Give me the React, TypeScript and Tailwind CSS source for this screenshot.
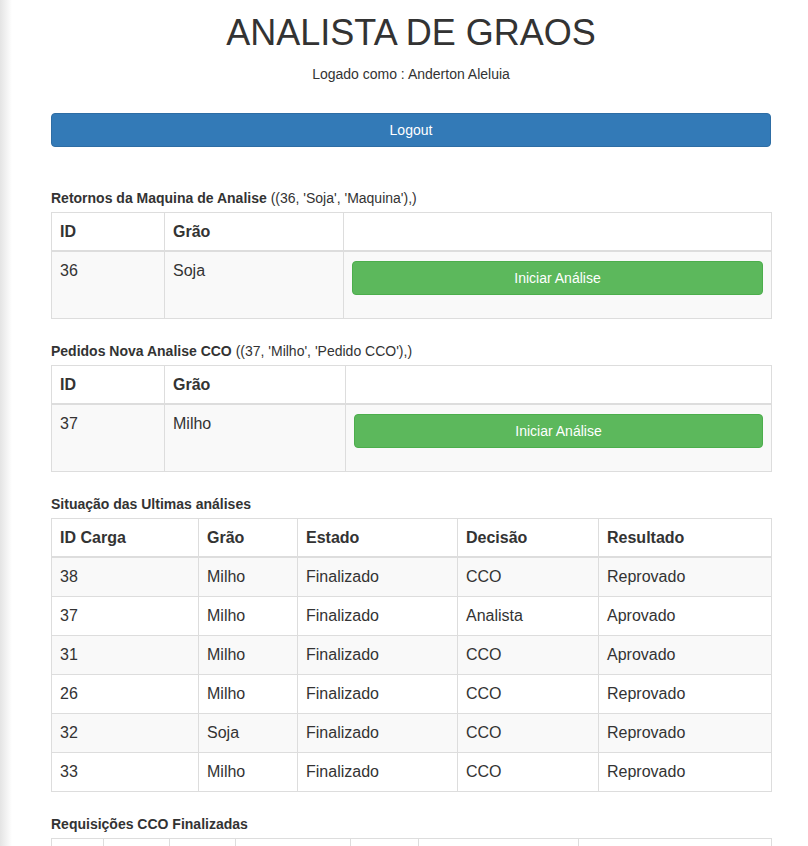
import React from "react";

const font = { fontFamily: '"Liberation Sans", Arial, Helvetica, sans-serif' };

function Label({ bold, rest }: { bold: string; rest?: string }) {
  return (
    <div className="mb-[4px] h-[20px] text-[14px] leading-[20px] text-[#333]">
      <span className="font-bold">{bold}</span>
      {rest ? <span> {rest}</span> : null}
    </div>
  );
}

function GreenButton() {
  return (
    <button className="mt-[1px] mb-[15px] block h-[34px] w-full rounded-[4px] border border-[#4cae4c] bg-[#5cb85c] text-[14px] leading-[20px] text-white">
      Iniciar Análise
    </button>
  );
}

const th =
  "border border-[#ddd] border-b-2 px-2 py-2 text-left align-bottom text-[16px] font-bold leading-[21px] text-[#333]";
const td = "border border-[#ddd] px-2 py-2 text-left align-top text-[16px] leading-[22px] text-[#333]";

function ActionTable({ id, grao, widths }: { id: string; grao: string; widths: number[] }) {
  return (
    <table className="mb-[22px] w-[720px] table-fixed border-collapse">
      <colgroup>
        {widths.map((w, i) => (
          <col key={i} style={{ width: w }} />
        ))}
      </colgroup>
      <thead>
        <tr className="bg-white">
          <th className={th}>ID</th>
          <th className={th}>Grão</th>
          <th className={th}></th>
        </tr>
      </thead>
      <tbody>
        <tr className="bg-[#f9f9f9]">
          <td className={td}>{id}</td>
          <td className={td}>{grao}</td>
          <td className={td}>
            <GreenButton />
          </td>
        </tr>
      </tbody>
    </table>
  );
}

const rows = [
  ["38", "Milho", "Finalizado", "CCO", "Reprovado"],
  ["37", "Milho", "Finalizado", "Analista", "Aprovado"],
  ["31", "Milho", "Finalizado", "CCO", "Aprovado"],
  ["26", "Milho", "Finalizado", "CCO", "Reprovado"],
  ["32", "Soja", "Finalizado", "CCO", "Reprovado"],
  ["33", "Milho", "Finalizado", "CCO", "Reprovado"],
];

export default function App() {
  return (
    <div className="relative min-h-[846px] bg-white text-[#333]" style={font}>
      <div className="pointer-events-none fixed left-0 top-0 h-full w-[12px] bg-gradient-to-r from-[#e4e4e4] to-white" />
      <div className="ml-[51px] w-[720px]">
        <h1 className="mt-[13px] text-center text-[36px] font-normal leading-[39.6px] text-[#333]">
          ANALISTA DE GRAOS
        </h1>
        <p className="mt-[11px] text-center text-[14px] leading-[20px]">Logado como : Anderton Aleluia</p>
        <button className="mt-[29px] block h-[34px] w-full rounded-[4px] border border-[#2e6da4] bg-[#337ab7] text-[14px] leading-[20px] text-white">
          Logout
        </button>

        <div className="mt-[41px]">
          <Label bold="Retornos da Maquina de Analise" rest="((36, 'Soja', 'Maquina'),)" />
          <ActionTable id="36" grao="Soja" widths={[113, 179, 428]} />

          <Label bold="Pedidos Nova Analise CCO" rest="((37, 'Milho', 'Pedido CCO'),)" />
          <ActionTable id="37" grao="Milho" widths={[113, 181, 426]} />

          <Label bold="Situação das Ultimas análises" />
          <table className="mb-[22px] w-[720px] table-fixed border-collapse">
            <colgroup>
              {[147, 99, 160, 141, 173].map((w, i) => (
                <col key={i} style={{ width: w }} />
              ))}
            </colgroup>
            <thead>
              <tr className="bg-white">
                <th className={th}>ID Carga</th>
                <th className={th}>Grão</th>
                <th className={th}>Estado</th>
                <th className={th}>Decisão</th>
                <th className={th}>Resultado</th>
              </tr>
            </thead>
            <tbody>
              {rows.map((r, i) => (
                <tr key={i} className={i % 2 === 0 ? "bg-[#f9f9f9]" : "bg-white"}>
                  {r.map((c, j) => (
                    <td key={j} className={td}>
                      {c}
                    </td>
                  ))}
                </tr>
              ))}
            </tbody>
          </table>

          <Label bold="Requisições CCO Finalizadas" />
          <table className="mb-[22px] w-[720px] table-fixed border-collapse">
            <colgroup>
              {[52, 66, 66, 115, 68, 160, 193].map((w, i) => (
                <col key={i} style={{ width: w }} />
              ))}
            </colgroup>
            <thead>
              <tr className="bg-white">
                {[0, 1, 2, 3, 4, 5, 6].map((k) => (
                  <th key={k} className={th}>
                    &nbsp;
                  </th>
                ))}
              </tr>
            </thead>
          </table>
        </div>
      </div>
    </div>
  );
}
